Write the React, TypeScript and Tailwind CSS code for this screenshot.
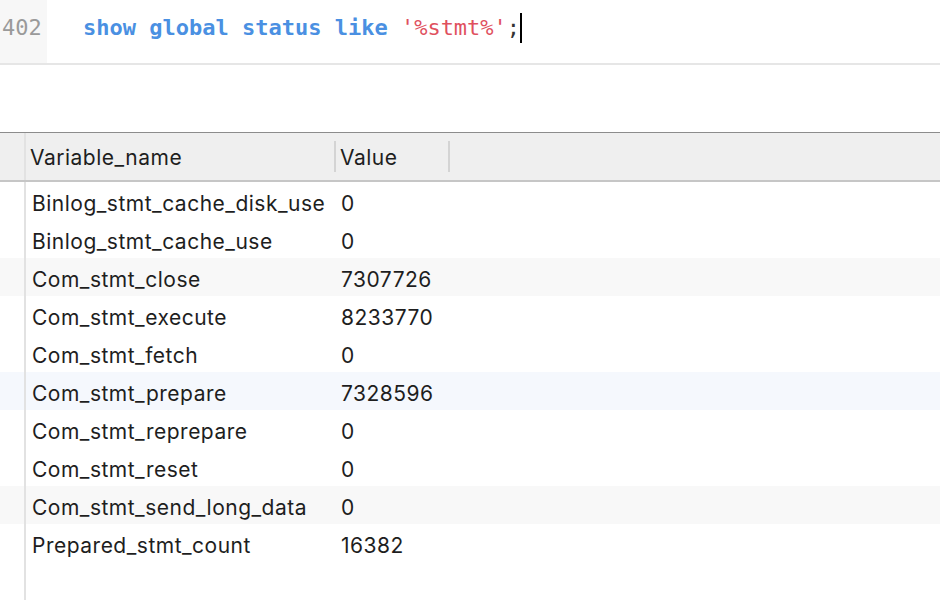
import React from 'react'

const rows: { name: string; value: string; tone?: 'gray' | 'blue' }[] = [
  { name: 'Binlog_stmt_cache_disk_use', value: '0' },
  { name: 'Binlog_stmt_cache_use', value: '0' },
  { name: 'Com_stmt_close', value: '7307726', tone: 'gray' },
  { name: 'Com_stmt_execute', value: '8233770' },
  { name: 'Com_stmt_fetch', value: '0' },
  { name: 'Com_stmt_prepare', value: '7328596', tone: 'blue' },
  { name: 'Com_stmt_reprepare', value: '0' },
  { name: 'Com_stmt_reset', value: '0' },
  { name: 'Com_stmt_send_long_data', value: '0', tone: 'gray' },
  { name: 'Prepared_stmt_count', value: '16382' },
]

const mono = { fontFamily: '"DejaVu Sans Mono", monospace' }

export default function App() {
  return (
    <div className="w-[940px] h-[600px] overflow-hidden bg-white flex flex-col">
      {/* Query editor */}
      <div className="h-[65px] flex border-b-2 border-[#e6e6e6] shrink-0">
        <div className="w-[47px] bg-[#f7f7f7] flex items-center pl-[2px] pb-[8px]">
          <span className="text-[22px] text-[#9a9a9a]" style={mono}>402</span>
        </div>
        <div className="flex items-center pl-[36px] pb-[8px]">
          <span className="text-[22px] font-bold text-[#4a90e2] whitespace-pre" style={mono}>
            show global status like{' '}
          </span>
          <span className="text-[22px] text-[#e0505e] whitespace-pre" style={mono}>'%stmt%'</span>
          <span className="text-[22px] text-[#333] whitespace-pre" style={mono}>;</span>
          <span className="w-[2px] h-[30px] bg-black" />
        </div>
      </div>

      <div className="h-[67px] shrink-0" />

      {/* Results table */}
      <div className="flex-1 flex flex-col text-[21px] tracking-[0.5px] text-[#1e1e1e]" style={{ fontFamily: 'Inter, "Liberation Sans", sans-serif' }}>
        <div className="h-[50px] shrink-0 flex bg-[#efefef] border-t border-[#8c8c8c] border-b-2 border-b-[#c6c6c6]">
          <div className="w-[26px] border-r-2 border-[#e2e2e2]" />
          <div className="w-[308px] flex items-center pl-[4px] pt-[2px]">Variable_name</div>
          <div className="w-[114px] flex items-center border-l-2 border-[#d4d4d4] pl-[4px] pt-[2px] my-[8px]">Value</div>
          <div className="flex-1 border-l-2 border-[#d4d4d4] my-[8px]" />
        </div>
        <div className="flex-1 flex flex-col">
          {rows.map((r) => (
            <div
              key={r.name}
              className={
                'h-[38px] flex ' +
                (r.tone === 'gray' ? 'bg-[#f8f8f8]' : r.tone === 'blue' ? 'bg-[#f5f8fd]' : 'bg-white')
              }
            >
              <div className="w-[26px] border-r-2 border-[#e2e2e2]" />
              <div className="w-[308px] flex items-center pl-[6px] pt-[5px] whitespace-nowrap">{r.name}</div>
              <div className="flex items-center pl-[7px] pt-[5px]">{r.value}</div>
            </div>
          ))}
          <div className="flex-1 flex">
            <div className="w-[26px] border-r-2 border-[#e2e2e2]" />
          </div>
        </div>
      </div>
    </div>
  )
}
